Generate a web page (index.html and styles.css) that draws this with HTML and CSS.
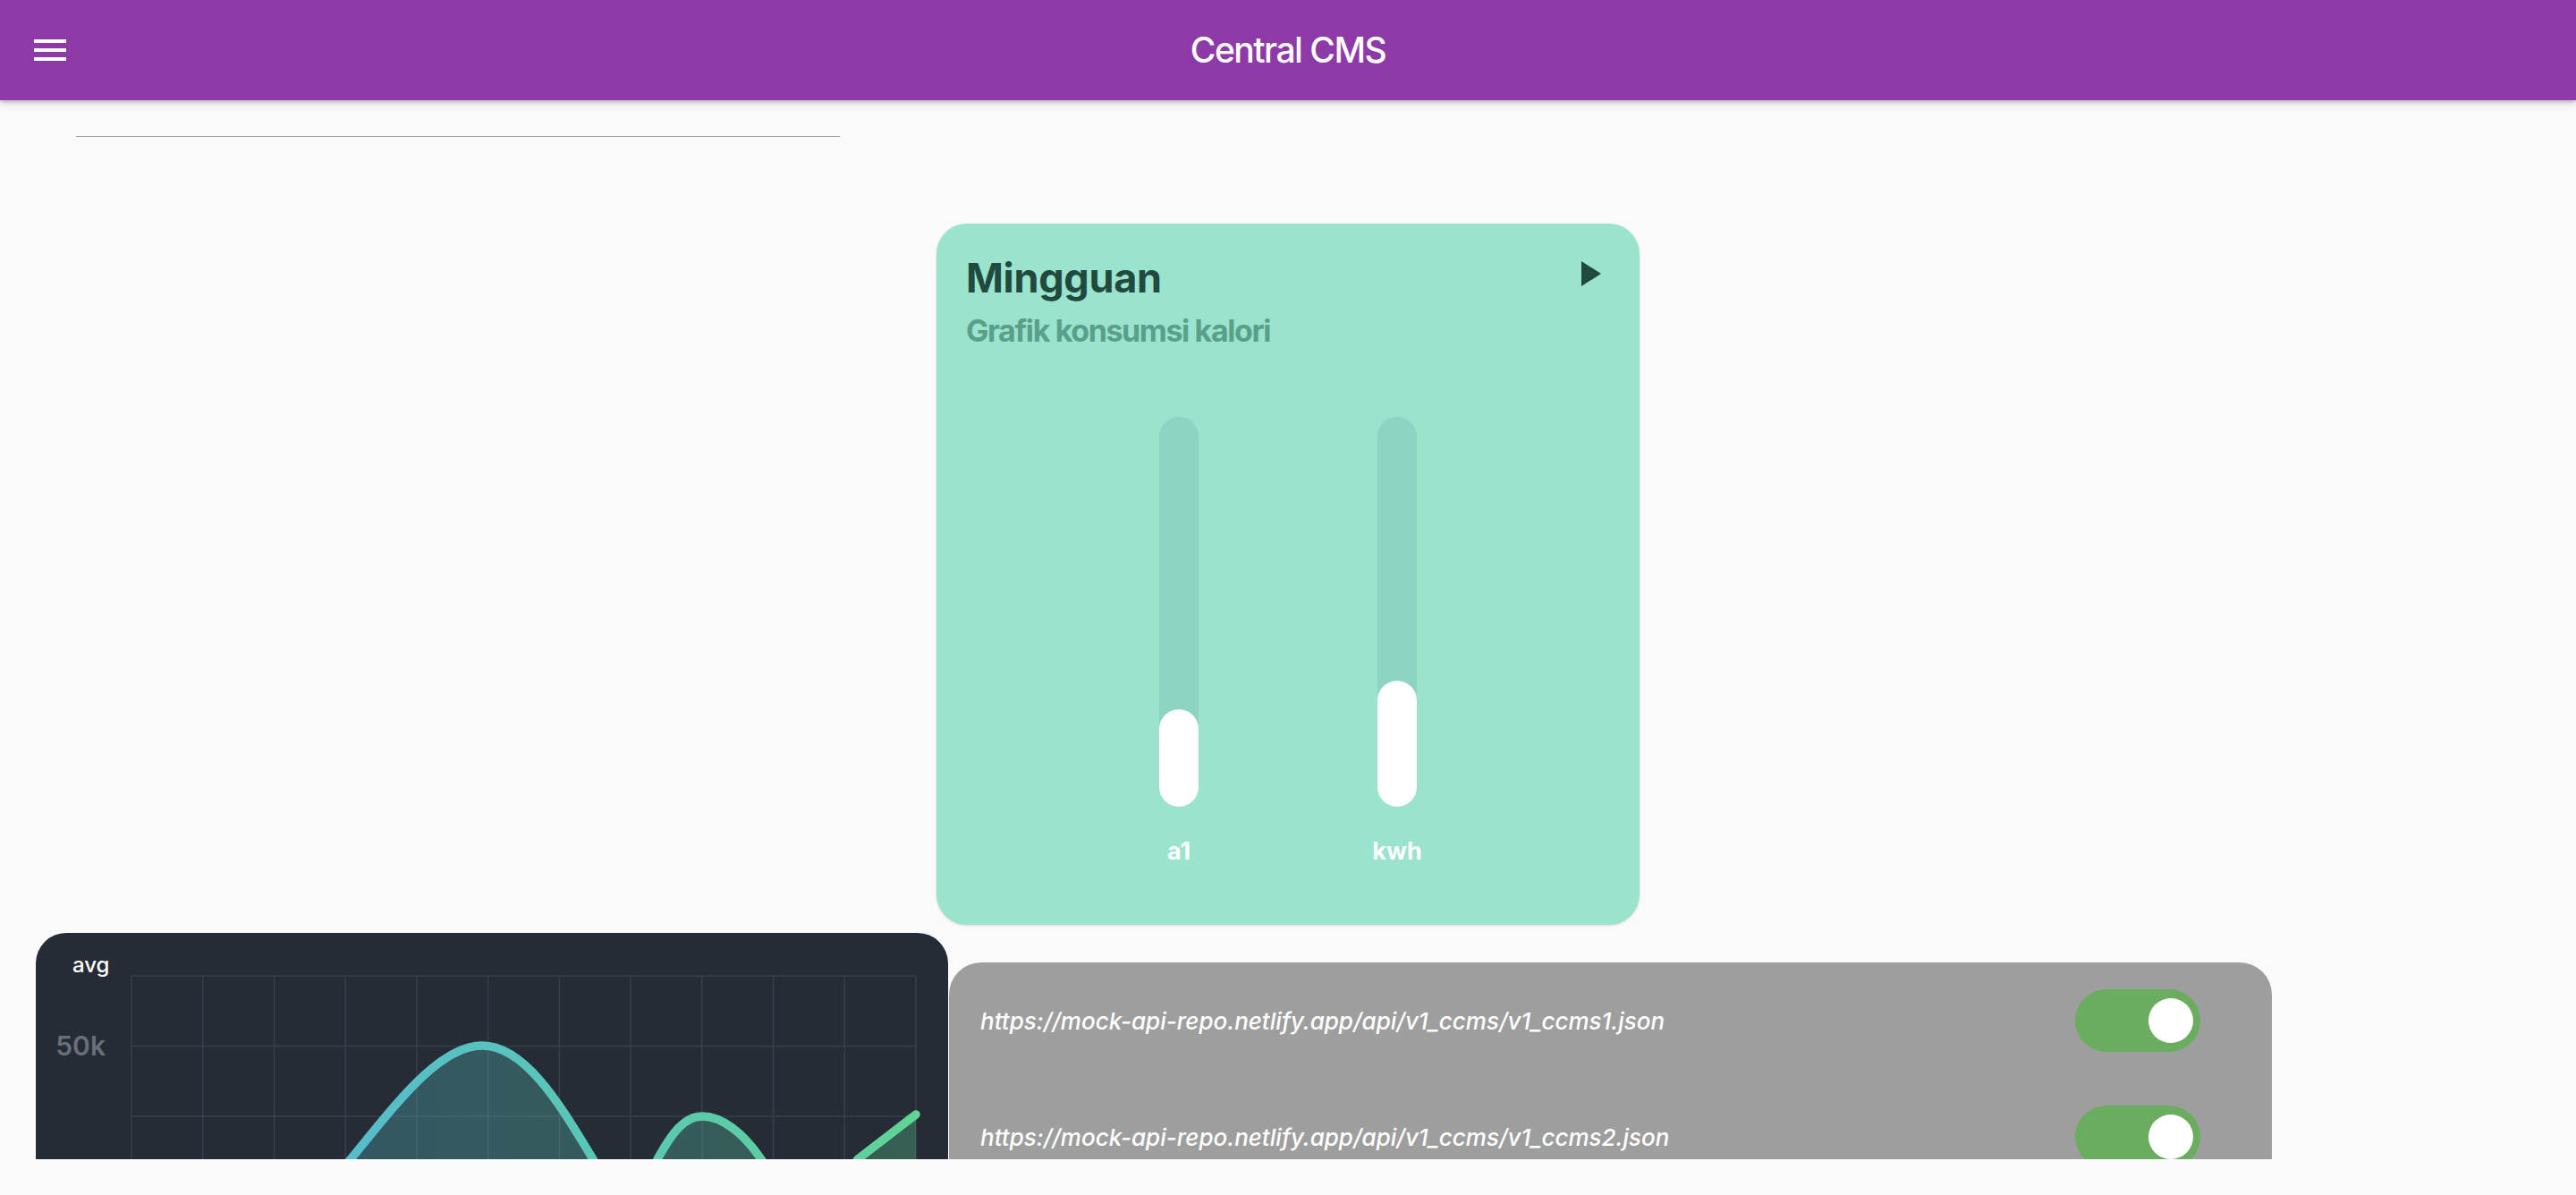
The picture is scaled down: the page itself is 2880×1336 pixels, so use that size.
FILE: index.html
```html
<!DOCTYPE html>
<html lang="id">
<head>
<meta charset="utf-8">
<title>Central CMS</title>
<link rel="stylesheet" href="styles.css">
</head>
<body>
<header class="appbar">
  <div class="appbar-left">
    <svg class="menu-icon" width="36" height="24" viewBox="0 0 36 24">
      <rect x="0" y="0" width="36" height="4" fill="#fff"/>
      <rect x="0" y="10" width="36" height="4" fill="#fff"/>
      <rect x="0" y="20" width="36" height="4" fill="#fff"/>
    </svg>
  </div>
  <h1 class="appbar-title">Central CMS</h1>
  <div class="appbar-right"></div>
</header>
<main class="content">
  <div class="divider"></div>

  <section class="weekly-card">
    <div class="weekly-head">
      <h2 class="weekly-title">Mingguan</h2>
      <svg class="play-icon" width="22" height="28" viewBox="0 0 22 28"><path d="M0 0 L22 14 L0 28 Z" fill="#1f4a3d"/></svg>
    </div>
    <p class="weekly-sub">Grafik konsumsi kalori</p>
    <div class="bars">
      <div class="bar-col">
        <div class="bar-track"><div class="bar-fill" style="height:109px"></div></div>
        <span class="bar-label">a1</span>
      </div>
      <div class="bar-col">
        <div class="bar-track"><div class="bar-fill" style="height:141px"></div></div>
        <span class="bar-label">kwh</span>
      </div>
    </div>
  </section>

  <div class="bottom-row">
    <section class="chart-card">
      <svg class="chart" width="1020" height="520" viewBox="0 0 1020 520">
        <defs>
          <linearGradient id="lineGrad" gradientUnits="userSpaceOnUse" x1="107" y1="0" x2="984" y2="0">
            <stop offset="0" stop-color="#52b4e0"/>
            <stop offset="1" stop-color="#60d396"/>
          </linearGradient>
        </defs>
        <g class="grid" stroke="#36404a" stroke-width="1.5" fill="none">
          <line x1="107" y1="48" x2="107" y2="520"/>
          <line x1="186.7" y1="48" x2="186.7" y2="520"/>
          <line x1="266.5" y1="48" x2="266.5" y2="520"/>
          <line x1="346.2" y1="48" x2="346.2" y2="520"/>
          <line x1="425.9" y1="48" x2="425.9" y2="520"/>
          <line x1="505.6" y1="48" x2="505.6" y2="520"/>
          <line x1="585.4" y1="48" x2="585.4" y2="520"/>
          <line x1="665.1" y1="48" x2="665.1" y2="520"/>
          <line x1="744.8" y1="48" x2="744.8" y2="520"/>
          <line x1="824.6" y1="48" x2="824.6" y2="520"/>
          <line x1="904.3" y1="48" x2="904.3" y2="520"/>
          <line x1="984" y1="48" x2="984" y2="520"/>
          <line x1="107" y1="48" x2="984" y2="48"/>
          <line x1="107" y1="126.5" x2="984" y2="126.5"/>
          <line x1="107" y1="205" x2="984" y2="205"/>
          <line x1="107" y1="283.5" x2="984" y2="283.5"/>
          <line x1="107" y1="362" x2="984" y2="362"/>
          <line x1="107" y1="440.5" x2="984" y2="440.5"/>
        </g>
        <text class="chart-title" x="41" y="44">avg</text>
        <text class="chart-axis" x="78" y="137" text-anchor="end">50k</text>
        <path fill="url(#lineGrad)" fill-opacity="0.3" d="M107,360 C170,390 280,340 352,253 C400,195 450,126 499,126 C548,126 588,195 623,253 C638,278 648,300 659,300 C672,300 684,275 695,253 C712,222 726,205 745,205 C766,205 790,222 811,253 C830,282 848,312 865,312 C884,312 900,284 919,253 C941,236 963,219 984,203 L984,520 L107,520 Z"/>
        <path fill="none" stroke="url(#lineGrad)" stroke-width="9.5" stroke-linecap="round" stroke-linejoin="round" d="M107,360 C170,390 280,340 352,253 C400,195 450,126 499,126 C548,126 588,195 623,253 C638,278 648,300 659,300 C672,300 684,275 695,253 C712,222 726,205 745,205 C766,205 790,222 811,253 C830,282 848,312 865,312 C884,312 900,284 919,253 C941,236 963,219 984,203"/>
      </svg>
    </section>

    <section class="api-card">
      <div class="api-row">
        <span class="api-url">https://mock-api-repo.netlify.app/api/v1_ccms/v1_ccms1.json</span>
        <span class="toggle"><span class="knob"></span></span>
      </div>
      <div class="api-row">
        <span class="api-url">https://mock-api-repo.netlify.app/api/v1_ccms/v1_ccms2.json</span>
        <span class="toggle"><span class="knob"></span></span>
      </div>
    </section>
  </div>
</main>
</body>
</html>
```
FILE: styles.css
```css
* { box-sizing: border-box; }

html, body {
  margin: 0;
  padding: 0;
  background: #fafafa;
  font-family: "Inter", "Roboto", "Noto Sans", sans-serif;
}

.appbar {
  height: 112px;
  background: #8e39a8;
  display: grid;
  grid-template-columns: 1fr auto 1fr;
  align-items: center;
  box-shadow: 0 2px 4px rgba(0,0,0,0.2), 0 4px 10px rgba(0,0,0,0.12);
  position: relative;
  z-index: 2;
}

.appbar-left {
  display: flex;
  align-items: center;
  padding-left: 38px;
}

.menu-icon { display: block; }

.appbar-title {
  margin: 0;
  color: #ffffff;
  font-size: 39px;
  font-weight: 500;
  letter-spacing: -1.5px;
  line-height: 48px;
}

.content {
  height: 1184px;
  overflow: hidden;
  display: flex;
  flex-direction: column;
}

.divider {
  margin: 40px 0 0 85px;
  width: 854px;
  height: 1px;
  background: #9a9a9a;
  flex: none;
}

.weekly-card {
  flex: none;
  align-self: center;
  margin-top: 97px;
  width: 786px;
  height: 784px;
  background: #9ae3cf;
  border-radius: 34px;
  padding: 34px 43px 0 33px;
  box-shadow: 0 1px 3px rgba(0,0,0,0.12);
  display: flex;
  flex-direction: column;
}

.weekly-head {
  display: flex;
  justify-content: space-between;
  align-items: flex-start;
}

.weekly-title {
  margin: 0;
  font-size: 45px;
  line-height: 54px;
  font-weight: 700;
  color: #1f4a3d;
  letter-spacing: -0.3px;
}

.play-icon {
  margin-top: 8px;
  display: block;
}

.weekly-sub {
  margin: 11px 0 0 0;
  font-size: 34px;
  line-height: 41px;
  font-weight: 700;
  color: #5a9f88;
  letter-spacing: -1.4px;
}

.bars {
  margin-top: 76px;
  margin-left: -33px;
  margin-right: -43px;
  display: flex;
  justify-content: center;
  gap: 144px;
}

.bar-col {
  width: 100px;
  display: flex;
  flex-direction: column;
  align-items: center;
}

.bar-track {
  width: 44px;
  height: 436px;
  border-radius: 22px;
  background: #8bd5c2;
  display: flex;
  flex-direction: column;
  justify-content: flex-end;
}

.bar-fill {
  width: 44px;
  border-radius: 22px;
  background: #ffffff;
}

.bar-label {
  margin-top: 33px;
  font-size: 27px;
  line-height: 34px;
  font-weight: 700;
  color: #ffffff;
}

.bottom-row {
  flex: none;
  display: flex;
  align-items: flex-start;
  gap: 1px;
  padding-left: 40px;
  margin-top: 9px;
}

.chart-card {
  flex: none;
  width: 1020px;
  height: 520px;
  background: #252c36;
  border-radius: 34px;
  overflow: hidden;
}

.chart { display: block; }

.chart-title {
  fill: #ffffff;
  font-family: "Inter", "Roboto", sans-serif;
  font-size: 24px;
  font-weight: 500;
}

.chart-axis {
  fill: #686f79;
  font-family: "Inter", "Roboto", sans-serif;
  font-size: 30px;
  font-weight: 600;
}

.api-card {
  flex: none;
  margin-top: 33px;
  width: 1479px;
  background: #9e9e9e;
  border-radius: 36px;
  padding: 30px 80px 120px 35px;
  display: flex;
  flex-direction: column;
  gap: 60px;
}

.api-row {
  height: 70px;
  display: flex;
  justify-content: space-between;
  align-items: center;
}

.api-url {
  color: #ffffff;
  font-size: 26px;
  font-weight: 500;
  font-style: italic;
  letter-spacing: 0;
}

.toggle {
  width: 140px;
  height: 70px;
  border-radius: 35px;
  background: #6aad5e;
  display: flex;
  align-items: center;
  justify-content: flex-end;
  padding-right: 8px;
}

.knob {
  width: 50px;
  height: 50px;
  border-radius: 50%;
  background: #ffffff;
}
```
